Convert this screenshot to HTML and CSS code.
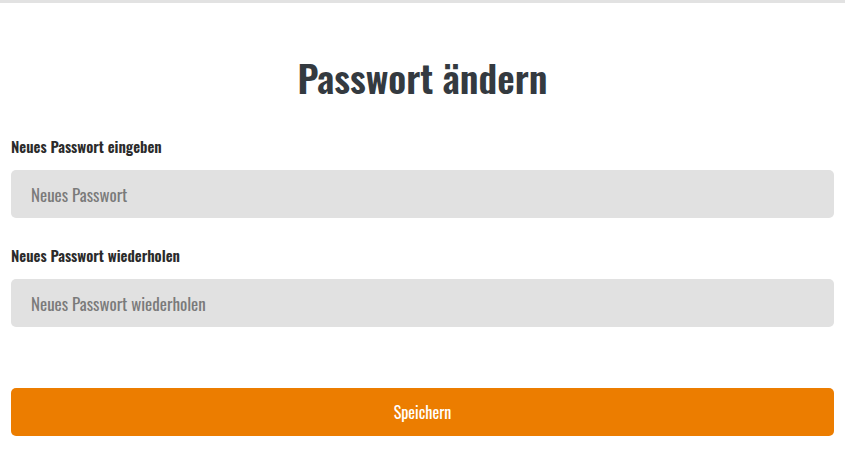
FILE: index.html
```html
<!DOCTYPE html>
<html lang="de">
<head>
<meta charset="utf-8">
<title>Passwort ändern</title>
<link rel="stylesheet" href="styles.css">
</head>
<body>
<div class="topbar"></div>
<main class="page">
  <h1 class="title">Passwort ändern</h1>
  <form class="form">
    <div class="field">
      <label class="label" for="pw1">Neues Passwort eingeben</label>
      <input class="input" id="pw1" type="password" placeholder="Neues Passwort">
    </div>
    <div class="field">
      <label class="label" for="pw2">Neues Passwort wiederholen</label>
      <input class="input" id="pw2" type="password" placeholder="Neues Passwort wiederholen">
    </div>
    <button class="btn" type="button">Speichern</button>
  </form>
</main>
</body>
</html>
```
FILE: styles.css
```css
* { box-sizing: border-box; }
html, body { margin: 0; padding: 0; background: #fff; }
body {
  font-family: "Oswald", "Liberation Sans Narrow", "DejaVu Sans Condensed", "Liberation Sans", sans-serif;
  color: #333;
}
.topbar { height: 3px; background: #e2e2e2; }
.page { padding: 0 11px; }
.title {
  margin: 46px 0 31px;
  font-size: 38px;
  line-height: 56px;
  font-weight: 600;
  text-align: center;
  color: #343a40;
}
.form { display: flex; flex-direction: column; }
.field { display: flex; flex-direction: column; gap: 14px; margin-bottom: 27px; }
.field + .field { margin-bottom: 0; }
.label {
  font-size: 15px;
  line-height: 20px;
  font-weight: 600;
  color: #2b2b2b;
}
.input {
  height: 48px;
  border: none;
  border-radius: 5px;
  background: #e1e1e1;
  padding: 0 20px;
  font-family: inherit;
  font-size: 17px;
  color: #333;
  outline: none;
}
.input::placeholder { color: #7a7a7a; opacity: 1; }
.btn {
  margin-top: 61px;
  height: 48px;
  border: none;
  border-radius: 5px;
  background: #ec7d00;
  color: #fff;
  font-family: inherit;
  font-size: 16px;
  cursor: pointer;
}
```
